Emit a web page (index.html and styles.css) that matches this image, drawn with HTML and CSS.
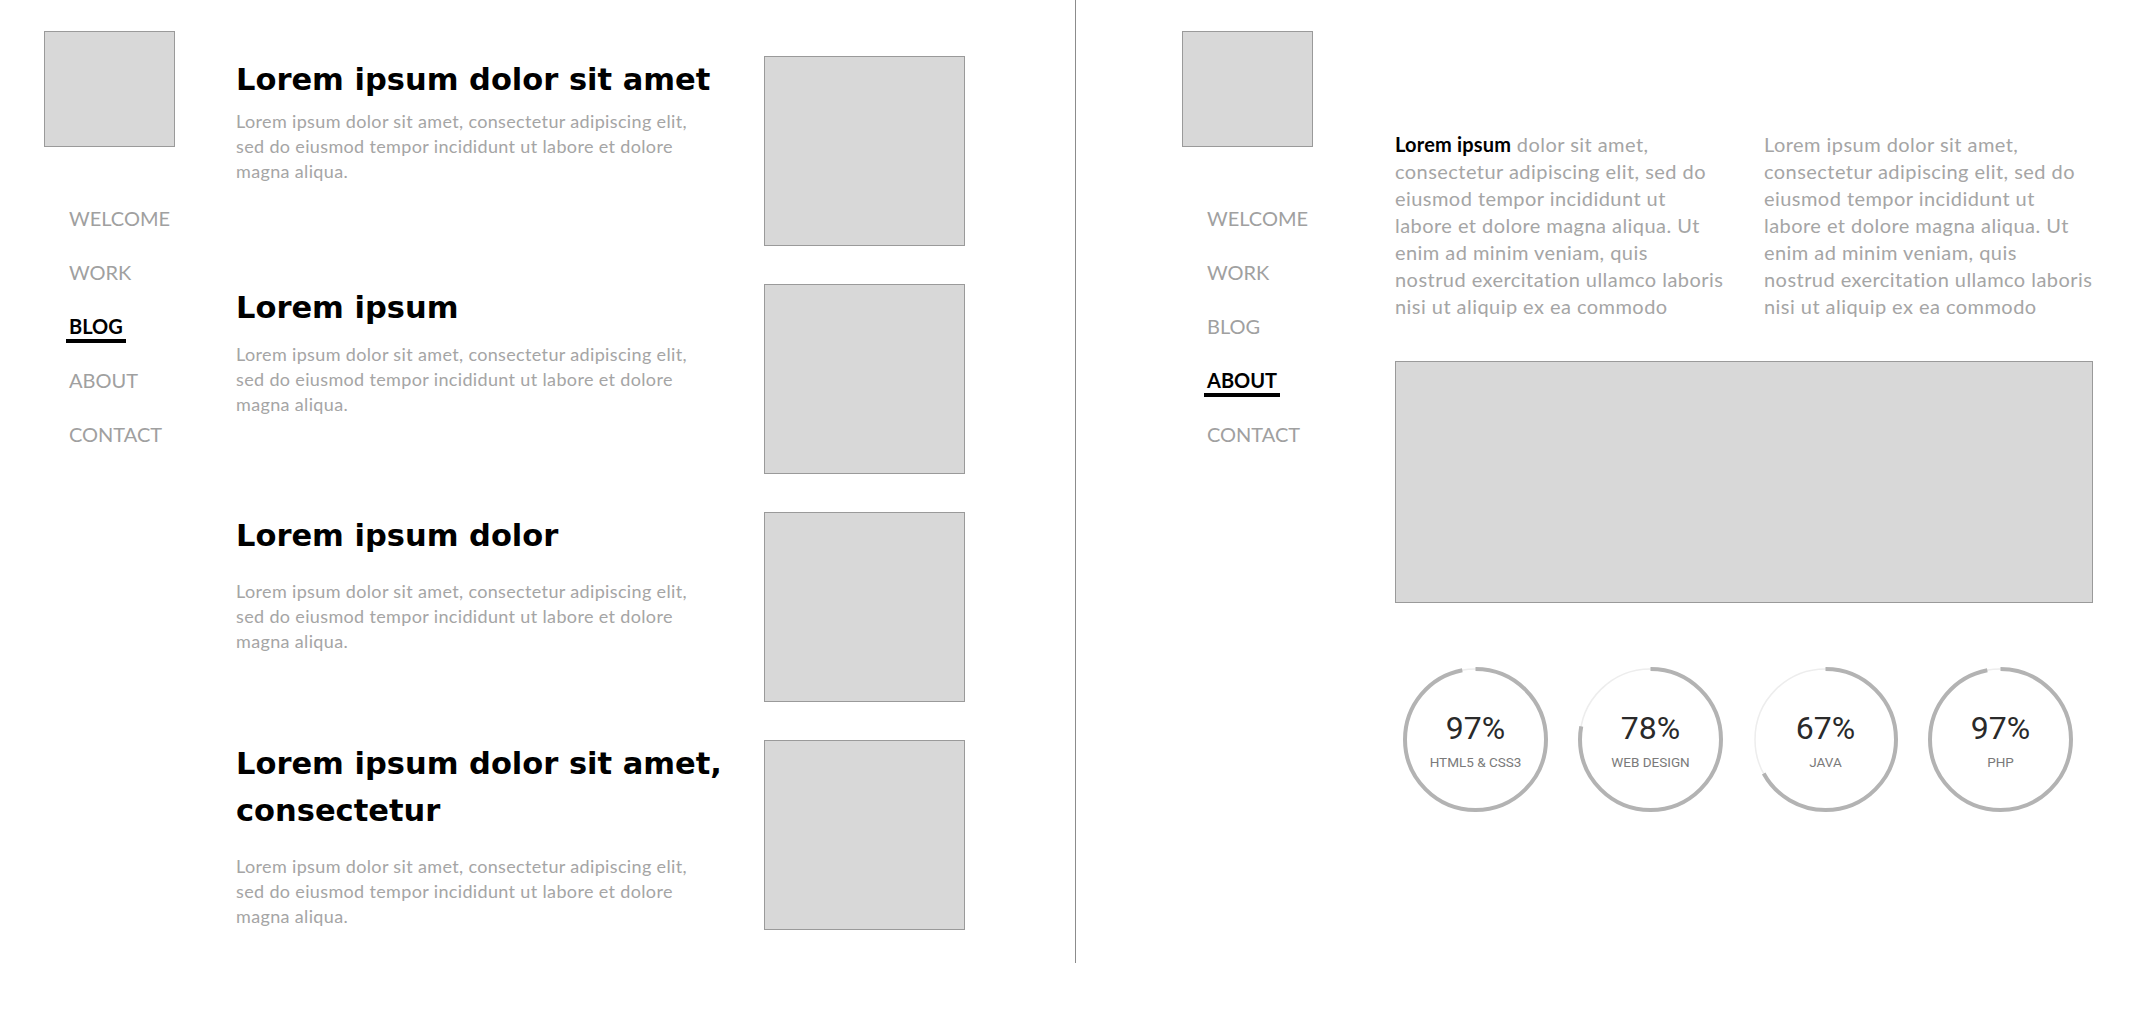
FILE: index.html
```html
<!DOCTYPE html>
<html lang="en">
<head>
<meta charset="utf-8">
<title>Portfolio wireframes</title>
<link rel="stylesheet" href="styles.css">
</head>
<body>
<div class="screen">
  <section class="page page-blog">
    <aside class="side">
      <div class="logo"></div>
      <nav class="nav">
        <a href="#">WELCOME</a>
        <a href="#">WORK</a>
        <a href="#" class="active">BLOG</a>
        <a href="#">ABOUT</a>
        <a href="#">CONTACT</a>
      </nav>
    </aside>
    <main class="posts">
      <article class="post">
        <div class="post-text">
          <h2>Lorem ipsum dolor sit amet</h2>
          <p>Lorem ipsum dolor sit amet, consectetur adipiscing elit, sed do eiusmod tempor incididunt ut labore et dolore magna aliqua.</p>
        </div>
        <div class="thumb"></div>
      </article>
      <article class="post post-mid">
        <div class="post-text">
          <h2>Lorem ipsum</h2>
          <p>Lorem ipsum dolor sit amet, consectetur adipiscing elit, sed do eiusmod tempor incididunt ut labore et dolore magna aliqua.</p>
        </div>
        <div class="thumb"></div>
      </article>
      <article class="post post-loose">
        <div class="post-text">
          <h2>Lorem ipsum dolor</h2>
          <p>Lorem ipsum dolor sit amet, consectetur adipiscing elit, sed do eiusmod tempor incididunt ut labore et dolore magna aliqua.</p>
        </div>
        <div class="thumb"></div>
      </article>
      <article class="post post-loose">
        <div class="post-text">
          <h2>Lorem ipsum dolor sit amet, consectetur</h2>
          <p>Lorem ipsum dolor sit amet, consectetur adipiscing elit, sed do eiusmod tempor incididunt ut labore et dolore magna aliqua.</p>
        </div>
        <div class="thumb"></div>
      </article>
    </main>
  </section>

  <section class="page page-about">
    <aside class="side side-wide">
      <div class="logo"></div>
      <nav class="nav">
        <a href="#">WELCOME</a>
        <a href="#">WORK</a>
        <a href="#">BLOG</a>
        <a href="#" class="active">ABOUT</a>
        <a href="#">CONTACT</a>
      </nav>
    </aside>
    <main class="about">
      <div class="cols">
        <p><strong>Lorem ipsum</strong> dolor sit amet,<br>consectetur adipiscing elit, sed do<br>eiusmod tempor incididunt ut<br>labore et dolore magna aliqua. Ut<br>enim ad minim veniam, quis<br>nostrud exercitation ullamco laboris<br>nisi ut aliquip ex ea commodo</p>
        <p>Lorem ipsum dolor sit amet,<br>consectetur adipiscing elit, sed do<br>eiusmod tempor incididunt ut<br>labore et dolore magna aliqua. Ut<br>enim ad minim veniam, quis<br>nostrud exercitation ullamco laboris<br>nisi ut aliquip ex ea commodo</p>
      </div>
      <div class="hero"></div>
      <div class="skills">
        <div class="skill">
          <svg class="ring" viewBox="0 0 145 145" width="145" height="145">
            <circle class="track" cx="72.5" cy="72.5" r="70.5"/>
            <circle class="bar" cx="72.5" cy="72.5" r="70.5" pathLength="100" stroke-dasharray="97 100" transform="rotate(-90 72.5 72.5)"/>
          </svg>
          <div class="skill-info"><span class="pct">97%</span><span class="label">HTML5 &amp; CSS3</span></div>
        </div>
        <div class="skill">
          <svg class="ring" viewBox="0 0 145 145" width="145" height="145">
            <circle class="track" cx="72.5" cy="72.5" r="70.5"/>
            <circle class="bar" cx="72.5" cy="72.5" r="70.5" pathLength="100" stroke-dasharray="78 100" transform="rotate(-90 72.5 72.5)"/>
          </svg>
          <div class="skill-info"><span class="pct">78%</span><span class="label">WEB DESIGN</span></div>
        </div>
        <div class="skill">
          <svg class="ring" viewBox="0 0 145 145" width="145" height="145">
            <circle class="track" cx="72.5" cy="72.5" r="70.5"/>
            <circle class="bar" cx="72.5" cy="72.5" r="70.5" pathLength="100" stroke-dasharray="67 100" transform="rotate(-90 72.5 72.5)"/>
          </svg>
          <div class="skill-info"><span class="pct">67%</span><span class="label">JAVA</span></div>
        </div>
        <div class="skill">
          <svg class="ring" viewBox="0 0 145 145" width="145" height="145">
            <circle class="track" cx="72.5" cy="72.5" r="70.5"/>
            <circle class="bar" cx="72.5" cy="72.5" r="70.5" pathLength="100" stroke-dasharray="97 100" transform="rotate(-90 72.5 72.5)"/>
          </svg>
          <div class="skill-info"><span class="pct">97%</span><span class="label">PHP</span></div>
        </div>
      </div>
    </main>
  </section>
</div>
</body>
</html>
```

FILE: styles.css
```css
* { box-sizing: border-box; }

html, body {
  margin: 0;
  background: #ffffff;
}

body {
  font-family: Lato, "Liberation Sans", sans-serif;
  color: #000;
}

.screen {
  display: flex;
  width: 2148px;
  height: 1024px;
  overflow: hidden;
}

.page {
  display: flex;
  align-items: flex-start;
  padding-top: 31px;
}

.page-blog {
  width: 1076px;
  height: 963px;
  padding-left: 44px;
  border-right: 1px solid #8c8c8c;
}

.page-about {
  flex: 1;
  padding-left: 106px;
}

.side {
  width: 192px;
  flex: none;
}

.side-wide {
  width: 213px;
}

.logo {
  width: 131px;
  height: 116px;
  background: #d8d8d8;
  border: 1px solid #9a9a9a;
}

.nav {
  display: flex;
  flex-direction: column;
  align-items: flex-start;
  margin-top: 44px;
  padding-left: 25px;
}

.nav a {
  display: block;
  height: 54px;
  line-height: 54px;
  font-size: 20px;
  font-weight: 400;
  color: #a0a0a0;
  text-decoration: none;
}

.nav a.active {
  font-weight: 700;
  color: #000;
  line-height: 20px;
  height: auto;
  padding: 17px 3px 3px;
  margin-left: -3px;
  margin-bottom: 10px;
  border-bottom: 4px solid #000;
}

/* ---------- blog ---------- */

.posts {
  display: flex;
  flex-direction: column;
  gap: 38px;
  padding-top: 25px;
  width: 729px;
}

.post {
  display: flex;
  justify-content: space-between;
  align-items: flex-start;
}

.post-text {
  width: 500px;
}

.post-text h2 {
  margin: 0;
  font-family: "DejaVu Sans", Lato, sans-serif;
  font-size: 30.5px;
  line-height: 47px;
  font-weight: 700;
  color: #000;
}

.post-text p {
  margin: 6px 0 0;
  width: 475px;
  font-size: 18px;
  line-height: 25px;
  letter-spacing: 0.35px;
  color: #a5a5a5;
}

.post-mid .post-text p {
  margin-top: 11px;
}

.post-loose .post-text p {
  margin-top: 20px;
}

.thumb {
  width: 201px;
  height: 190px;
  flex: none;
  background: #d8d8d8;
  border: 1px solid #9a9a9a;
}

/* ---------- about ---------- */

.about {
  width: 698px;
  padding-top: 100px;
}

.cols {
  display: grid;
  grid-template-columns: 1fr 1fr;
  column-gap: 40px;
}

.cols p {
  margin: 0;
  font-size: 20px;
  line-height: 27px;
  letter-spacing: 0.45px;
  white-space: nowrap;
  color: #a5a5a5;
}

.cols strong {
  color: #000;
  font-weight: 700;
  letter-spacing: 0.2px;
}

.hero {
  margin-top: 41px;
  height: 242px;
  background: #d8d8d8;
  border: 1px solid #9a9a9a;
}

.skills {
  display: flex;
  gap: 30px;
  margin-top: 64px;
  padding-left: 8px;
}

.skill {
  display: grid;
  width: 145px;
  height: 145px;
}

.skill > * {
  grid-area: 1 / 1;
}

.ring {
  display: block;
}

.ring .track {
  fill: none;
  stroke: #ededed;
  stroke-width: 1.5;
}

.ring .bar {
  fill: none;
  stroke: #b3b3b3;
  stroke-width: 4;
}

.skill-info {
  display: flex;
  flex-direction: column;
  align-items: center;
  justify-content: center;
  font-family: Roboto, Inter, sans-serif;
}

.pct {
  font-size: 32px;
  line-height: 36px;
  font-weight: 400;
  color: #2a2a2a;
}

.label {
  margin-top: 8px;
  font-size: 13.5px;
  line-height: 16px;
  color: #7a7a7a;
}
```
